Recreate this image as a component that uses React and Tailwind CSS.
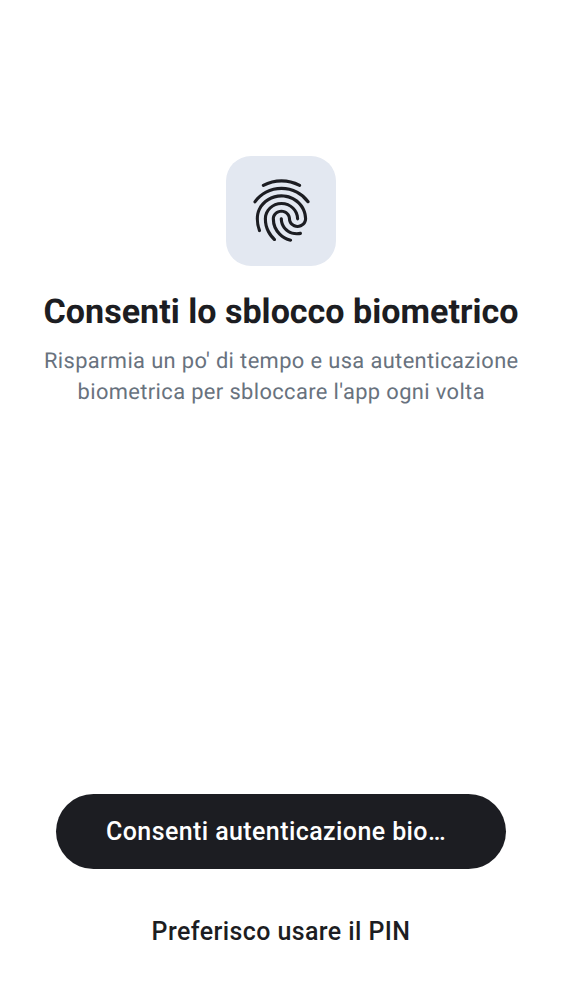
import { MdFingerprint } from "react-icons/md";

export default function App() {
  return (
    <main className="flex h-[1000px] w-[562px] flex-col items-center bg-white pt-[156px] font-['Roboto',sans-serif] text-[#1c1d22] [text-rendering:geometricPrecision]">
      <div className="flex size-[109.5px] items-center justify-center rounded-[25px] bg-[#e3e8f1]">
        <MdFingerprint className="mb-[0.5px] size-[75px]" />
      </div>
      <h1 className="mt-[25.5px] text-[34.1px] leading-[42px] font-bold whitespace-nowrap">Consenti lo sblocco biometrico</h1>
      <p className="mt-[13px] pl-[0.5px] text-center text-[21.86px] leading-[31.2px] tracking-[0.38px] whitespace-nowrap text-[#68727e]">
        Risparmia un po' di tempo e usa autenticazione<br />biometrica per sbloccare l'app ogni volta
      </p>
      <button className="mt-auto flex h-[75px] w-[450px] items-center rounded-full bg-[#1c1d22] pl-[50px] text-[24.98px] font-medium tracking-[0.42px] text-white">
        Consenti autenticazione bio…
      </button>
      <button className="mt-[25px] mb-[31px] flex h-[75px] w-[450px] items-center justify-center text-[24.98px] font-medium tracking-[0.42px]">
        Preferisco usare il PIN
      </button>
    </main>
  );
}
